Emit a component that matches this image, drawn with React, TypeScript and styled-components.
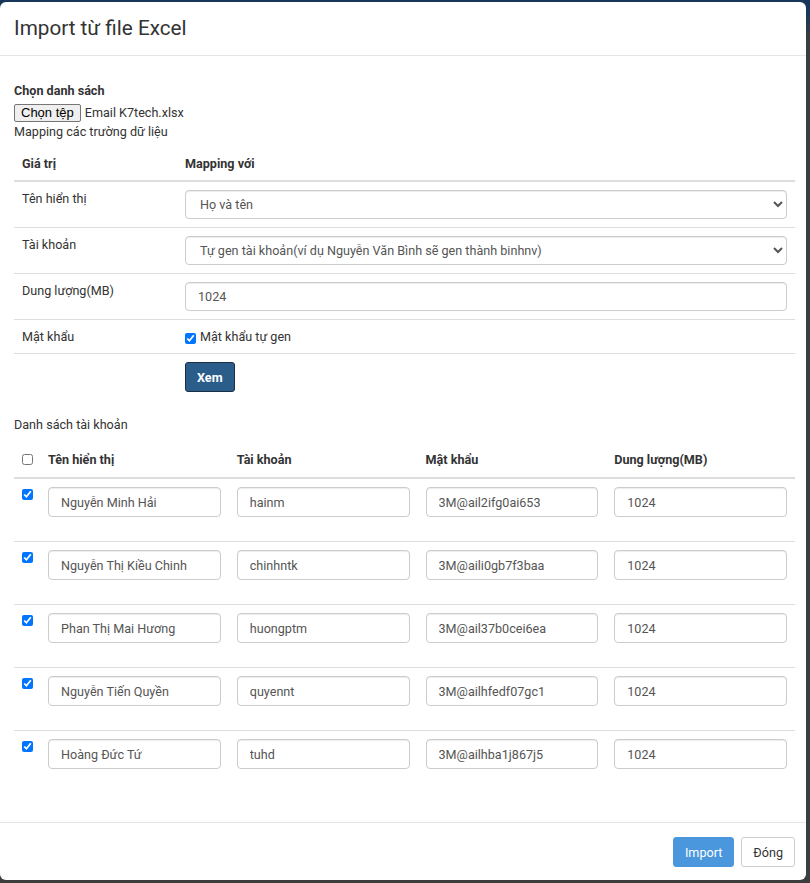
import React, { FC } from "react";
import styled, { createGlobalStyle } from "styled-components";

const GlobalStyle = createGlobalStyle`
  html, body {
    margin: 0;
    padding: 0;
  }
  body {
    background: linear-gradient(to bottom, #17365a 0, #17365a 10px, #3d3d3d 40px, #3d3d3d 100%);
    font-family: Roboto, "Noto Sans", Arial, sans-serif;
    font-size: 12.6px;
    color: #333;
    min-height: 883px;
  }
  * {
    box-sizing: border-box;
  }
`;

type Account = {
  name: string;
  username: string;
  password: string;
  quota: string;
};

const accounts: Account[] = [
  { name: "Nguyễn Minh Hải", username: "hainm", password: "3M@ail2ifg0ai653", quota: "1024" },
  { name: "Nguyễn Thị Kiều Chinh", username: "chinhntk", password: "3M@aili0gb7f3baa", quota: "1024" },
  { name: "Phan Thị Mai Hương", username: "huongptm", password: "3M@ail37b0cei6ea", quota: "1024" },
  { name: "Nguyễn Tiến Quyền", username: "quyennt", password: "3M@ailhfedf07gc1", quota: "1024" },
  { name: "Hoàng Đức Tứ", username: "tuhd", password: "3M@ailhba1j867j5", quota: "1024" },
];

const Backdrop = styled.div`
  padding: 2px 4px 3px 0;
`;

const Modal = styled.div`
  width: 806px;
  background: #fff;
  border-radius: 6px;
`;

const Header = styled.div`
  padding: 14px 14px 14px;
  border-bottom: 1px solid #e5e5e5;
`;

const Title = styled.h4`
  margin: 0;
  font-size: 20.7px;
  font-weight: 400;
  line-height: 25px;
  color: #333;
`;

const Body = styled.div`
  padding: 26px 11px 13px 14px;
`;

const FieldLabel = styled.div`
  font-weight: 700;
  line-height: 17px;
`;

const FileRow = styled.div`
  display: flex;
  align-items: center;
  gap: 4px;
  height: 19px;
  margin-top: 4px;
`;

const FileButton = styled.button`
  font-family: "Liberation Sans", Arial, sans-serif;
  font-size: 13px;
  color: #000;
  background: #efefef;
  border: 1px solid #767676;
  border-radius: 2px;
  padding: 0 6px;
  height: 18px;
  line-height: 16px;
`;

const FileName = styled.span`
  line-height: 17px;
`;

const Hint = styled.div`
  line-height: 17px;
  margin-top: 1px;
`;

const Table = styled.table<{ $gap?: number }>`
  width: 100%;
  border-collapse: collapse;
  table-layout: fixed;
  margin-top: ${(p) => p.$gap ?? 7}px;
  margin-bottom: 16px;
`;

const Th = styled.th<{ $width?: number }>`
  text-align: left;
  font-weight: 700;
  padding: 8px 8px;
  line-height: 17px;
  vertical-align: top;
  border-bottom: 2px solid #ddd;
  ${(p) => (p.$width ? `width: ${p.$width}px;` : "")}
`;

const Row = styled.tr<{ $last?: boolean }>`
  border-bottom: ${(p) => (p.$last ? "none" : "1px solid #ddd")};
`;

const Td = styled.td`
  padding: 8px;
  line-height: 17px;
  vertical-align: top;
`;

const Select = styled.select`
  width: 100%;
  height: 29px;
  padding: 4px 10px;
  font-family: Roboto, Arial, sans-serif;
  font-size: 12.6px;
  color: #555;
  background: #fff;
  border: 1px solid #ccc;
  border-radius: 4px;
  box-shadow: inset 0 1px 1px rgba(0, 0, 0, 0.075);
`;

const Input = styled.input<{ $spaced?: boolean }>`
  display: block;
  width: 100%;
  height: ${(p) => (p.$spaced ? 30 : 29)}px;
  padding: 5px 12px;
  margin-bottom: ${(p) => (p.$spaced ? 16 : 0)}px;
  font-family: Roboto, Arial, sans-serif;
  font-size: 12.6px;
  color: #555;
  background: #fff;
  border: 1px solid #ccc;
  border-radius: 4px;
  box-shadow: inset 0 1px 1px rgba(0, 0, 0, 0.075);
`;

const CheckLabel = styled.label`
  display: flex;
  align-items: center;
  gap: 4px;
`;

const Check = styled.input<{ $top?: number }>`
  width: 11px;
  height: 11px;
  margin: ${(p) => p.$top ?? 3}px 0 0 0;
  accent-color: #0075ff;
`;

const Button = styled.button<{ $variant: "dark" | "primary" | "default" }>`
  height: 30px;
  padding: 0 11px;
  font-family: Roboto, Arial, sans-serif;
  font-size: 12.6px;
  border-radius: 3px;
  cursor: pointer;
  font-weight: ${(p) => (p.$variant === "dark" ? 700 : 400)};
  color: ${(p) => (p.$variant === "default" ? "#333" : "#fff")};
  background: ${(p) =>
    p.$variant === "dark" ? "#2b5d8b" : p.$variant === "primary" ? "#4a97de" : "#fff"};
  border: 1px solid
    ${(p) => (p.$variant === "dark" ? "#1b2f44" : p.$variant === "primary" ? "#4a97de" : "#ccc")};
`;

const SectionTitle = styled.div`
  line-height: 17px;
`;

const Footer = styled.div`
  display: flex;
  justify-content: flex-end;
  gap: 7px;
  padding: 14px 11px 13px 14px;
  border-top: 1px solid #e5e5e5;
`;

const MappingTable: FC = () => (
  <Table>
    <thead>
      <tr>
        <Th $width={163}>Giá trị</Th>
        <Th>Mapping với</Th>
      </tr>
    </thead>
    <tbody>
      <Row>
        <Td>Tên hiển thị</Td>
        <Td>
          <Select defaultValue="name">
            <option value="name">Họ và tên</option>
          </Select>
        </Td>
      </Row>
      <Row>
        <Td>Tài khoản</Td>
        <Td>
          <Select defaultValue="auto">
            <option value="auto">Tự gen tài khoản(ví dụ Nguyễn Văn Bình sẽ gen thành binhnv)</option>
          </Select>
        </Td>
      </Row>
      <Row>
        <Td>Dung lượng(MB)</Td>
        <Td>
          <Input defaultValue="1024" />
        </Td>
      </Row>
      <Row>
        <Td>Mật khẩu</Td>
        <Td>
          <CheckLabel>
            <Check type="checkbox" defaultChecked />
            Mật khẩu tự gen
          </CheckLabel>
        </Td>
      </Row>
      <Row $last>
        <Td />
        <Td>
          <Button $variant="dark">Xem</Button>
        </Td>
      </Row>
    </tbody>
  </Table>
);

const AccountTable: FC = () => (
  <Table $gap={10}>
    <thead>
      <tr>
        <Th $width={26}>
          <Check type="checkbox" />
        </Th>
        <Th>Tên hiển thị</Th>
        <Th>Tài khoản</Th>
        <Th>Mật khẩu</Th>
        <Th>Dung lượng(MB)</Th>
      </tr>
    </thead>
    <tbody>
      {accounts.map((a, i) => (
        <Row key={a.username} $last={i === accounts.length - 1}>
          <Td>
            <Check type="checkbox" defaultChecked $top={1} />
          </Td>
          <Td>
            <Input $spaced defaultValue={a.name} />
          </Td>
          <Td>
            <Input $spaced defaultValue={a.username} />
          </Td>
          <Td>
            <Input $spaced defaultValue={a.password} />
          </Td>
          <Td>
            <Input $spaced defaultValue={a.quota} />
          </Td>
        </Row>
      ))}
    </tbody>
  </Table>
);

const App: FC = () => {
  return (
    <>
      <GlobalStyle />
      <Backdrop>
        <Modal>
          <Header>
            <Title>Import từ file Excel</Title>
          </Header>
          <Body>
            <FieldLabel>Chọn danh sách</FieldLabel>
            <FileRow>
              <FileButton type="button">Chọn tệp</FileButton>
              <FileName>Email K7tech.xlsx</FileName>
            </FileRow>
            <Hint>Mapping các trường dữ liệu</Hint>
            <MappingTable />
            <SectionTitle>Danh sách tài khoản</SectionTitle>
            <AccountTable />
          </Body>
          <Footer>
            <Button $variant="primary">Import</Button>
            <Button $variant="default">Đóng</Button>
          </Footer>
        </Modal>
      </Backdrop>
    </>
  );
};

export default App;
